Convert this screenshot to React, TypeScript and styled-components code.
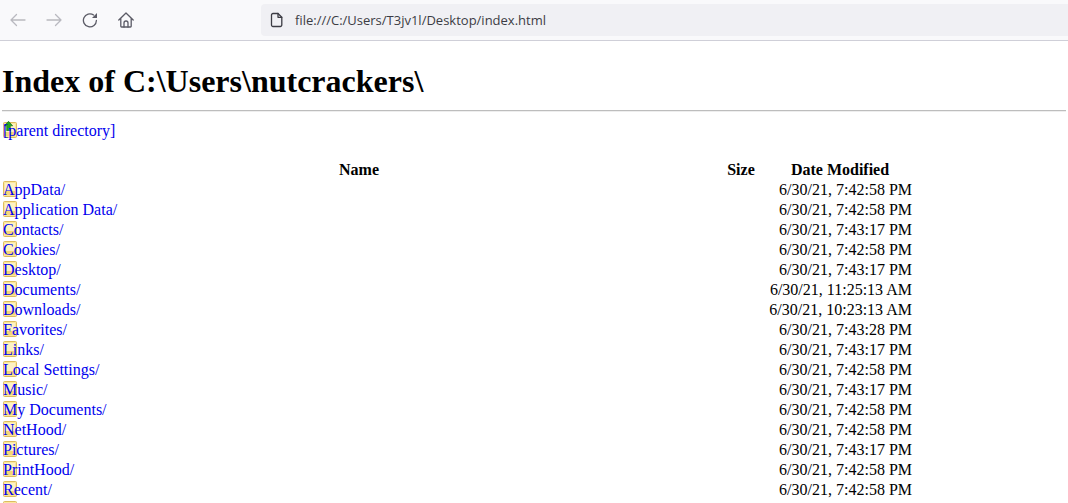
import React from "react";
import styled, { createGlobalStyle } from "styled-components";

const Global = createGlobalStyle`
  html, body {
    margin: 0;
    padding: 0;
    background: #fff;
    overflow: hidden;
  }
  body {
    font-family: "Liberation Serif", "Times New Roman", serif;
    font-size: 16px;
    color: #000;
  }
`;

const Page = styled.div`
  width: 1068px;
  height: 503px;
  overflow: hidden;
`;

//浏览器工具栏
const Toolbar = styled.div`
  display: flex;
  align-items: center;
  height: 40px;
  background: #f9f9fb;
  border-bottom: 1px solid #cfcfd8;
  padding-left: 8px;
`;

const NavButton = styled.div<{ $off?: boolean }>`
  display: flex;
  align-items: center;
  justify-content: center;
  width: 20px;
  height: 20px;
  margin-right: 16px;
  color: ${(p) => (p.$off ? "#b9b9bf" : "#5b5b66")};
`;

const ToolIcon = styled.svg<{ $size?: number }>`
  width: ${(p) => p.$size || 16}px;
  height: ${(p) => p.$size || 16}px;
  fill: none;
  stroke: currentColor;
  stroke-width: 1.3;
  stroke-linecap: round;
  stroke-linejoin: round;
  flex-shrink: 0;
`;

const UrlBar = styled.div`
  display: flex;
  align-items: center;
  flex: 1;
  height: 32px;
  margin-left: 109px;
  padding-left: 8px;
  border-radius: 4px 0 0 4px;
  background: #f0f0f4;
  color: #3c3c44;
  font-family: "Open Sans", "Noto Sans", sans-serif;
  font-size: 13px;
`;

const UrlText = styled.span`
  margin-left: 10px;
`;

const Content = styled.div`
  padding: 0 2px;
`;

const Title = styled.h1`
  margin: 22px 0 0;
  font-size: 32px;
  line-height: 37px;
  font-weight: bold;
`;

const Rule = styled.hr`
  margin: 10px 0 9px;
  border: 0;
  border-top: 1px solid #bdbdbd;
  border-bottom: 1px solid #eee;
`;

const ParentRow = styled.div`
  height: 20px;
  margin-bottom: 19px;
  padding-left: 1px;
  line-height: 20px;
`;

const Entry = styled.a`
  position: relative;
  isolation: isolate;
  color: #0000ee;
  text-decoration: none;
`;

const EntryIcon = styled.svg`
  position: absolute;
  left: 0;
  top: 0;
  width: 14px;
  height: 16px;
  z-index: -1;
`;

const ArrowIcon = styled.svg`
  position: absolute;
  left: 1px;
  top: -1px;
  width: 9px;
  height: 10px;
  z-index: -1;
`;

const Listing = styled.table`
  width: 912px;
  border-collapse: collapse;
  table-layout: fixed;
`;

const HeadCell = styled.th<{ $w: number }>`
  width: ${(p) => p.$w}px;
  height: 20px;
  padding: 0;
  font-weight: bold;
  text-align: center;
`;

const Cell = styled.td<{ $right?: boolean }>`
  height: 20px;
  padding: 0 2px 0 1px;
  line-height: 20px;
  white-space: nowrap;
  text-align: ${(p) => (p.$right ? "right" : "left")};
`;

const FolderGlyph = () => (
  <EntryIcon viewBox="0 0 14 16">
    <rect x="0.5" y="0.5" width="13" height="15" rx="1" fill="#fbe79c" stroke="#dcbc60" />
    <rect x="2" y="2" width="10" height="12" fill="#fdf1c4" />
    <rect x="2" y="10" width="10" height="4" fill="#f5d576" />
  </EntryIcon>
);

const files: [string, string][] = [
  ["AppData", "6/30/21, 7:42:58 PM"],
  ["Application Data", "6/30/21, 7:42:58 PM"],
  ["Contacts", "6/30/21, 7:43:17 PM"],
  ["Cookies", "6/30/21, 7:42:58 PM"],
  ["Desktop", "6/30/21, 7:43:17 PM"],
  ["Documents", "6/30/21, 11:25:13 AM"],
  ["Downloads", "6/30/21, 10:23:13 AM"],
  ["Favorites", "6/30/21, 7:43:28 PM"],
  ["Links", "6/30/21, 7:43:17 PM"],
  ["Local Settings", "6/30/21, 7:42:58 PM"],
  ["Music", "6/30/21, 7:43:17 PM"],
  ["My Documents", "6/30/21, 7:42:58 PM"],
  ["NetHood", "6/30/21, 7:42:58 PM"],
  ["Pictures", "6/30/21, 7:43:17 PM"],
  ["PrintHood", "6/30/21, 7:42:58 PM"],
  ["Recent", "6/30/21, 7:42:58 PM"],
  ["SendTo", "6/30/21, 7:42:58 PM"],
];

function App() {
  return (
    <Page>
      <Global />
      <Toolbar>
        <NavButton $off>
          <ToolIcon viewBox="0 0 16 16">
            <path d="M1 8 H15 M6.5 2.5 L1 8 L6.5 13.5" />
          </ToolIcon>
        </NavButton>
        <NavButton $off>
          <ToolIcon viewBox="0 0 16 16">
            <path d="M1 8 H15 M9.5 2.5 L15 8 L9.5 13.5" />
          </ToolIcon>
        </NavButton>
        <NavButton>
          <ToolIcon viewBox="0 0 16 16">
            <path d="M14.4 8.4 A6.5 6.5 0 1 1 11.6 3" />
            <path d="M15 1 V6 H10 Z" fill="currentColor" stroke="none" />
          </ToolIcon>
        </NavButton>
        <NavButton>
          <ToolIcon viewBox="0 0 16 16">
            <path d="M0.8 8 L8 1 L15.2 8 M2.8 6.4 V14.2 A0.8 0.8 0 0 0 3.6 15 H12.4 A0.8 0.8 0 0 0 13.2 14.2 V6.4" />
            <path d="M6 15 V11 A2 2 0 0 1 10 11 V15" />
          </ToolIcon>
        </NavButton>
        <UrlBar>
          <ToolIcon viewBox="0 0 16 16">
            <path d="M4 1.5 H9 L12.8 5.3 V13 A1.5 1.5 0 0 1 11.3 14.5 H4 A1.5 1.5 0 0 1 2.5 13 V3 A1.5 1.5 0 0 1 4 1.5 Z" />
            <path d="M9 1.5 V5.3 H12.8" />
          </ToolIcon>
          <UrlText>file:///C:/Users/T3jv1l/Desktop/index.html</UrlText>
        </UrlBar>
      </Toolbar>
      <Content>
        <Title>Index of C:\Users\nutcrackers\</Title>
        <Rule />
        <ParentRow>
          <Entry href="#">
            <FolderGlyph />
            <ArrowIcon viewBox="0 0 9 10">
              <path d="M4.5 0.3 L8.7 4.8 H6.3 V9.7 H2.7 V4.8 H0.3 Z" fill="#22a322" stroke="#0d6a0d" strokeWidth="0.6" />
            </ArrowIcon>
            [parent directory]
          </Entry>
        </ParentRow>
        <Listing>
          <colgroup>
            <col style={{ width: 714 }} />
            <col style={{ width: 50 }} />
            <col />
          </colgroup>
          <thead>
            <tr>
              <HeadCell $w={714}>Name</HeadCell>
              <HeadCell $w={50}>Size</HeadCell>
              <HeadCell $w={148}>Date Modified</HeadCell>
            </tr>
          </thead>
          <tbody>
            {files.map(([name, date]) => (
              <tr key={name}>
                <Cell>
                  <Entry href="#">
                    <FolderGlyph />
                    {name}/
                  </Entry>
                </Cell>
                <Cell />
                <Cell $right>{date}</Cell>
              </tr>
            ))}
          </tbody>
        </Listing>
      </Content>
    </Page>
  );
}

export default App;
